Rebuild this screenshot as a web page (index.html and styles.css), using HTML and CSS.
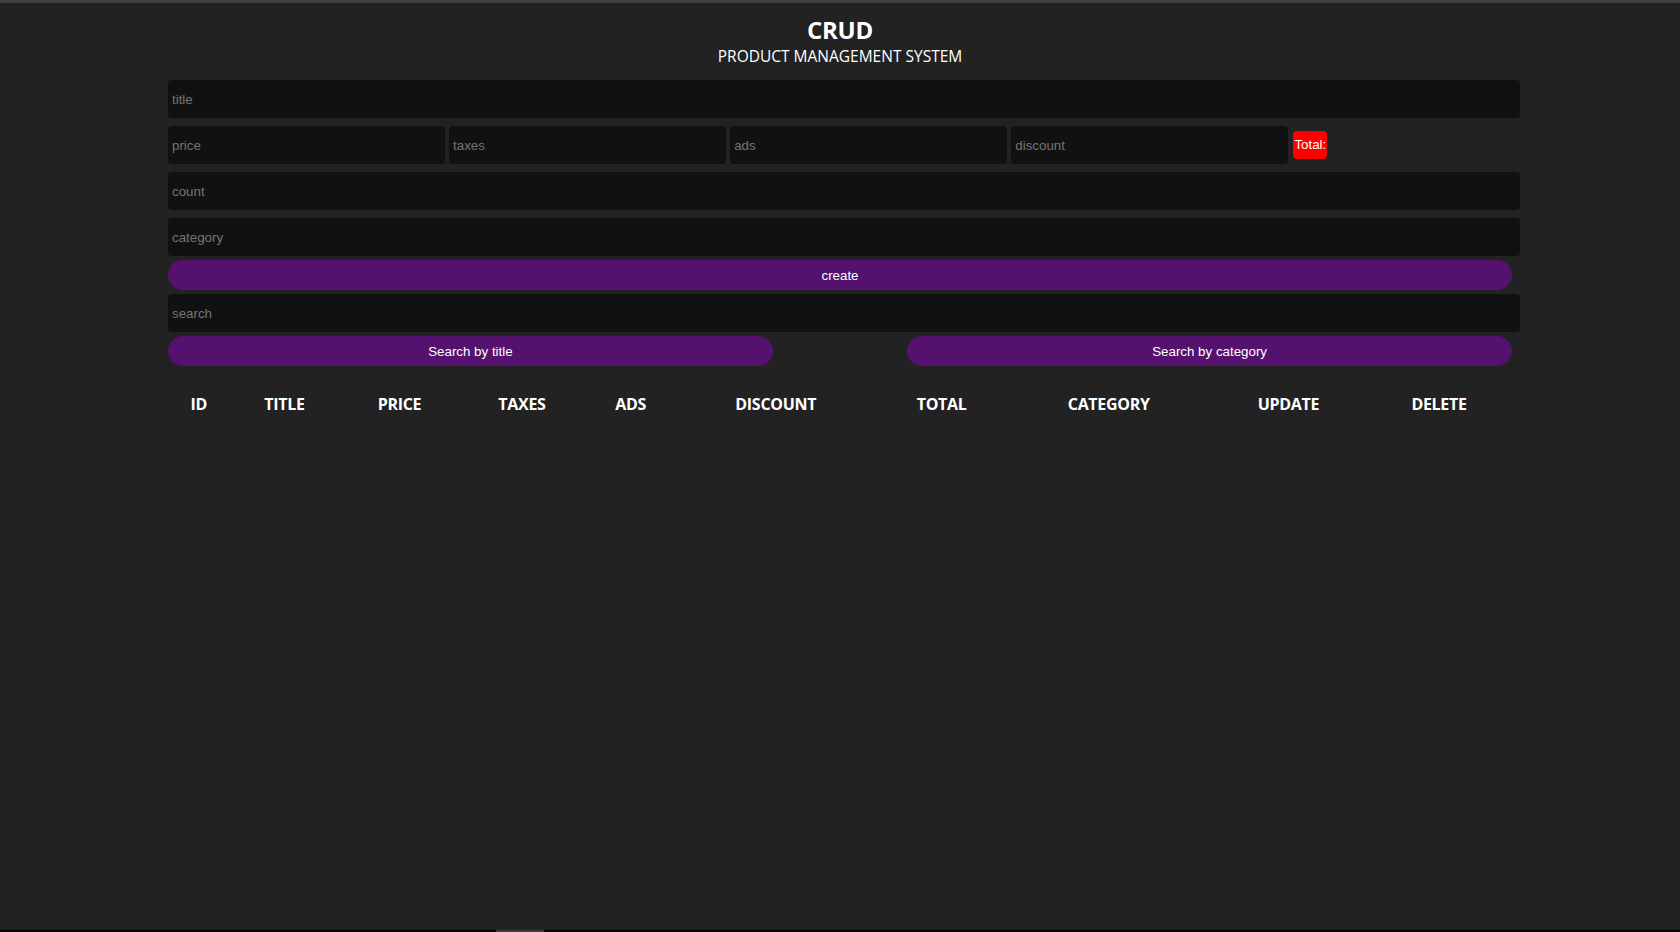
FILE: index.html
```html
<!DOCTYPE html>
<html lang="en">
<head>
<meta charset="UTF-8">
<title>CRUD</title>
<link rel="stylesheet" href="styles.css">
</head>
<body>
<div class="topbar"></div>
<div class="crud">
  <div class="head">
    <h2>crud</h2>
    <p>product management system</p>
  </div>
  <div class="inputs">
    <input type="text" class="field" placeholder="title">
    <div class="price">
      <input type="number" class="field small" placeholder="price">
      <input type="number" class="field small" placeholder="taxes">
      <input type="number" class="field small" placeholder="ads">
      <input type="number" class="field small" placeholder="discount">
      <small class="total">Total:</small>
    </div>
    <input type="number" class="field" placeholder="count">
    <input type="text" class="field" placeholder="category">
    <button class="btn">create</button>
  </div>
  <div class="outputs">
    <div class="searchBlock">
      <input type="text" class="field" placeholder="search">
      <div class="btnSearch">
        <button class="btn half">Search by title</button>
        <button class="btn half">Search by category</button>
      </div>
    </div>
    <table class="table">
      <thead>
        <tr>
          <th>id</th>
          <th>title</th>
          <th>price</th>
          <th>taxes</th>
          <th>ads</th>
          <th>discount</th>
          <th>total</th>
          <th>category</th>
          <th>update</th>
          <th>delete</th>
        </tr>
      </thead>
      <tbody></tbody>
    </table>
  </div>
</div>
<div class="bottombar"><span class="thumb"></span></div>
</body>
</html>
```
FILE: styles.css
```css
* {
  margin: 0;
  padding: 0;
}

html, body {
  height: 100%;
}

body {
  background: #222222;
  color: #ffffff;
  font-family: "Open Sans", "Noto Sans", sans-serif;
  overflow: hidden;
}

.topbar {
  height: 3px;
  background: #414141;
}

.crud {
  width: 1344px;
  margin: 0 auto 0 168px;
}

.head {
  text-align: center;
  text-transform: uppercase;
  margin: 11px 0 9px;
}

.head h2 {
  font-size: 24px;
  font-weight: 700;
  line-height: 32px;
  letter-spacing: -0.3px;
}

.head p {
  font-size: 15.5px;
  line-height: 21px;
}

.inputs,
.searchBlock {
  display: flex;
  flex-direction: column;
}

.field {
  display: block;
  width: 1344px;
  height: 30px;
  padding: 4px;
  margin: 4px 0;
  border: none;
  outline: none;
  border-radius: 4px;
  background: #111111;
  color: #ffffff;
  font-family: "Liberation Sans", Arial, sans-serif;
  font-size: 13.333px;
  -moz-appearance: textfield;
}

.field::placeholder {
  color: #757575;
}

.field::-webkit-outer-spin-button,
.field::-webkit-inner-spin-button {
  -webkit-appearance: none;
  margin: 0;
}

.price {
  display: flex;
  align-items: center;
  gap: 4.3px;
}

.field.small {
  width: 268.8px;
}

.total {
  margin-left: 1px;
  background: #ff0000;
  color: #ffffff;
  border-radius: 4px;
  padding: 6px 1px;
  font-family: "Liberation Sans", Arial, sans-serif;
  font-size: 13.333px;
  line-height: 16px;
}

.btn {
  width: 100%;
  height: 30px;
  border: none;
  border-radius: 20px;
  background: #55116e;
  color: #ffffff;
  font-family: "Liberation Sans", Arial, sans-serif;
  font-size: 13.333px;
  cursor: pointer;
}

.btnSearch {
  display: flex;
  justify-content: space-between;
}

.btn.half {
  width: 45%;
}

.table {
  width: 100%;
  margin-top: 16px;
  text-align: center;
  border-spacing: 2px;
}

.table th {
  text-transform: uppercase;
  padding: 10px 5px;
  font-size: 16px;
  font-weight: 700;
  line-height: 21px;
  letter-spacing: -0.3px;
}

.bottombar {
  position: fixed;
  left: 0;
  right: 0;
  bottom: 0;
  height: 2px;
  background: #000000;
}

.thumb {
  position: absolute;
  left: 496px;
  top: 0;
  width: 48px;
  height: 2px;
  background: #3c3c3c;
}
```
